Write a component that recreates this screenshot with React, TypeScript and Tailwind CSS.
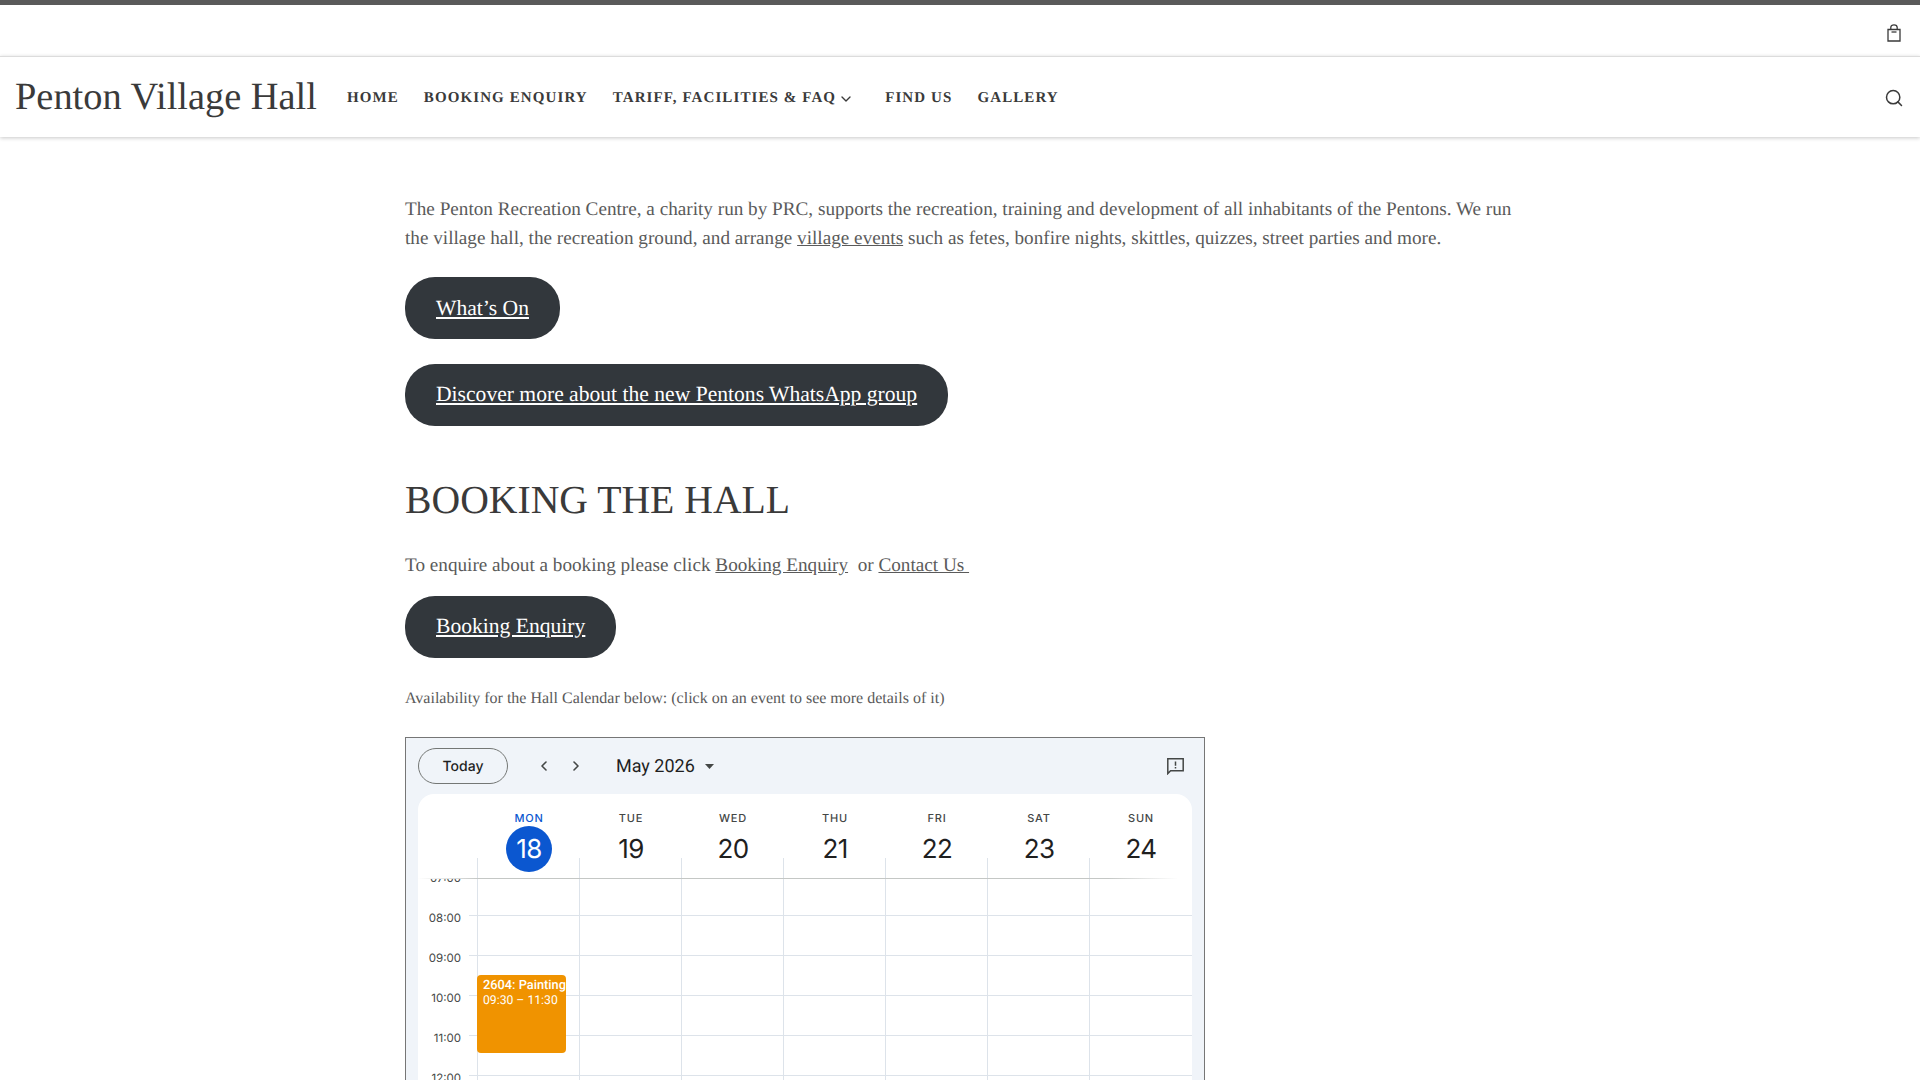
import { ChevronDown, ChevronLeft, ChevronRight, Search } from 'lucide-react'

const days = [
  { name: 'MON', date: '18', today: true },
  { name: 'TUE', date: '19' },
  { name: 'WED', date: '20' },
  { name: 'THU', date: '21' },
  { name: 'FRI', date: '22' },
  { name: 'SAT', date: '23' },
  { name: 'SUN', date: '24' },
]

const hours = ['07:00', '08:00', '09:00', '10:00', '11:00', '12:00']

function PillLink({ children, flush }: { children: string; flush?: boolean }) {
  return (
    <div className="mb-[25px] flex">
      <a
        className={`flex h-[62px] items-center rounded-[30px] bg-[#32373c] px-[31px] text-[21.6px] text-white underline ${flush ? 'pt-[1px]' : 'pb-[1px]'}`}
      >
        {children}
      </a>
    </div>
  )
}

function BagIcon() {
  return (
    <svg width="14" height="18" viewBox="0 0 14 18" fill="none" stroke="#3a3a3a" strokeWidth="1.3">
      <path d="M1 5.5h12v11.5H1z" />
      <path d="M3.8 5.5V3.6C3.8 1.9 5.2.8 7 .8s3.2 1.1 3.2 2.8v1.9" />
      <path d="M4.5 8h5" />
    </svg>
  )
}

function Calendar() {
  return (
    <div className="h-[400px] w-[800px] border border-[#767676] bg-[#f0f4f9] px-3 font-['Roboto',sans-serif]">
      <div className="flex h-[56px] items-center text-[#1f1f1f]">
        <div className="flex h-[36px] w-[90px] items-center justify-center rounded-full border border-[#747775] font-['Inter',sans-serif] text-[14px] font-medium">
          Today
        </div>
        <div className="ml-[28px] flex gap-[16px] text-[#444746]">
          <ChevronLeft size={16} strokeWidth={2.4} />
          <ChevronRight size={16} strokeWidth={2.4} />
        </div>
        <span className="ml-[32px] text-[18px]">May 2026</span>
        <svg className="ml-[10px]" width="9" height="5" viewBox="0 0 9 5" fill="#444746">
          <path d="M0 0h9L4.5 5z" />
        </svg>
        <svg className="ml-auto mr-[8px]" width="17" height="17" viewBox="0 0 17 17" fill="none" stroke="#444746" strokeWidth="1.5">
          <path d="M.8.8h15.4v12H3.6L.8 15.6z" />
          <path d="M8.5 3.5v4.2M8.5 9v1.6" />
        </svg>
      </div>

      <div className="h-[400px] rounded-t-[16px] bg-white">
        <div className="flex h-[84px] pl-[59px]">
          {days.map((day) => (
            <div key={day.name} className="relative flex w-[102px] flex-col items-center pl-[2px] pt-[17px]">
              <span className={`font-['Inter',sans-serif] text-[11px] font-medium leading-[14px] tracking-[0.8px] ${day.today ? 'text-[#0b57d0]' : 'text-[#444746]'}`}>
                {day.name}
              </span>
              <span
                className={`mt-[1px] flex h-[46px] w-[46px] items-center justify-center rounded-full font-['Inter',sans-serif] text-[26px] tracking-[-0.6px] ${day.today ? 'bg-[#0b57d0] text-white' : 'text-[#1f1f1f]'}`}
              >
                {day.date}
              </span>
              <span className="absolute bottom-0 left-0 h-[20px] w-px bg-[#dde3ea]" />
            </div>
          ))}
        </div>
        <div className="h-px bg-[linear-gradient(to_right,transparent_0,#c4c7c5_60px,#c4c7c5_690px,transparent_760px)]" />
        <div className="h-[240px] overflow-hidden">
          <div className="relative -mt-[4px]">
            {hours.map((hour) => (
              <div key={hour} className="flex h-[40px]">
                <div className="flex w-[51px] justify-end pr-[8px]">
                  <span className="-mt-[4px] font-['Inter',sans-serif] text-[11.5px] leading-[14px] text-[#444746]">{hour}</span>
                </div>
                <div className="flex flex-1 border-t border-[#dde3ea] pl-[8px]">
                  {days.map((day) => (
                    <div key={day.name} className="h-[40px] w-[102px] border-l border-[#dde3ea]" />
                  ))}
                </div>
              </div>
            ))}
            <div className="absolute left-[59px] top-[100px] h-[78px] w-[89px] rounded-[4px] bg-[#f09300] pl-[6px] pt-[3px] text-[12.2px] leading-[15px] text-white">
              <div className="whitespace-nowrap text-[12.8px] font-medium">2604: Painting</div>
              <div>09:30 – 11:30</div>
            </div>
          </div>
        </div>
      </div>
    </div>
  )
}

export default function App() {
  return (
    <div className="h-[1080px] overflow-hidden bg-white font-['Liberation_Serif',serif] text-[#3a3a3a] [text-rendering:geometricPrecision]">
      <header className="border-t-[5px] border-[#5a5a5a]">
        <div className="flex h-[51px] items-center justify-end pr-[19px] pt-[4px]">
          <BagIcon />
        </div>
        <nav className="flex h-[81px] items-center border-t border-[#dcdcdc] pl-[15px] pr-[16px] shadow-[0_1px_4px_rgba(0,0,0,0.22)]">
          <a className="text-[38.4px] leading-none">Penton Village Hall</a>
          <div className="ml-[30px] mt-[2px] flex items-center text-[15px] font-bold tracking-[1.1px]">
            <a>HOME</a>
            <a className="ml-[25px]">BOOKING ENQUIRY</a>
            <a className="ml-[25px]">TARIFF, FACILITIES &amp; FAQ</a>
            <ChevronDown className="ml-[2px] mt-[2px]" size={16} strokeWidth={2} />
            <a className="ml-[31px]">FIND US</a>
            <a className="ml-[25px]">GALLERY</a>
          </div>
          <Search className="ml-auto mt-[2px]" size={20} strokeWidth={1.8} color="#3a3a3a" />
        </nav>
      </header>

      <main className="mx-auto w-[1110px] pt-[58px] text-[19.2px] leading-[29px] text-[#5a5a5a]">
        <p className="mb-[24px]">
          The Penton Recreation Centre, a charity run by PRC, supports the recreation, training and development of all
          inhabitants of the Pentons. We run the village hall, the recreation ground, and arrange{' '}
          <a className="underline">village events</a> such as fetes, bonfire nights, skittles, quizzes, street parties
          and more.
        </p>
        <PillLink flush>What’s On</PillLink>
        <PillLink>Discover more about the new Pentons WhatsApp group</PillLink>
        <h2 className="mt-[49px] text-[39.7px] leading-[50px] text-[#3a3a3a]">BOOKING THE HALL</h2>
        <p className="mb-[16px] mt-[26px]">
          To enquire about a booking please click <a className="underline">Booking Enquiry</a>&nbsp; or{' '}
          <a className="underline">Contact Us&nbsp;</a>
        </p>
        <PillLink>Booking Enquiry</PillLink>
        <p className="mb-[25px] mt-[28px] text-[16px] leading-[26px]">
          Availability for the Hall Calendar below: (click on an event to see more details of it)
        </p>
        <Calendar />
      </main>
    </div>
  )
}
